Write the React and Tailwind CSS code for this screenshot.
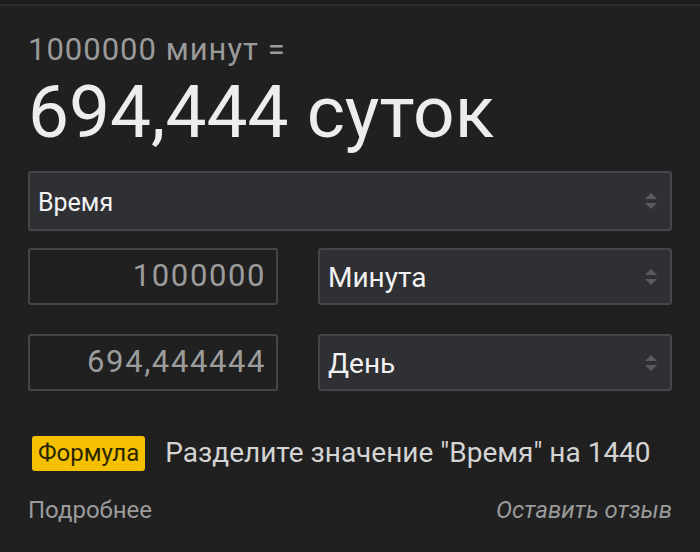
import React from 'react';

function Arrows() {
    return (
        <svg width="14" height="20" viewBox="0 0 14 20" className="shrink-0">
            <path d="M7 2 L13 8 H1 Z" fill="#5a5b5f" />
            <path d="M7 18 L13 12 H1 Z" fill="#5a5b5f" />
        </svg>
    );
}

function Select({ label, className = '' }) {
    return (
        <div className={`flex items-center justify-between bg-[#2f3034] border-2 border-[#45464a] rounded-[3px] pl-[8px] pr-[12px] ${className}`}>
            <span className="text-[#f2f2f2] pt-[3px]">{label}</span>
            <Arrows />
        </div>
    );
}

function Field({ value }) {
    return (
        <div className="w-[250px] h-[57px] flex items-center justify-end border-2 border-[#45464a] rounded-[3px] pr-[10px] bg-[#202020]">
            <span className="text-[31px] tracking-[1.6px] text-[#9c9c9c]">{value}</span>
        </div>
    );
}

export default function App() {
    return (
        <div className="w-[700px] h-[552px] bg-[#202020] font-['Roboto',sans-serif] flex flex-col">
            <div className="h-[6px] bg-[#1c1c1c] border-b-2 border-[#2a2b2c]" />
            <div className="px-[28px] pt-[24px]">
                <p className="text-[31px] leading-[40px] tracking-[1px] text-[#9a9a9a]">1000000 минут =</p>
                <p className="text-[73px] leading-[84px] text-[#ededed]">694,444 суток</p>

                <Select label="Время" className="mt-[17px] h-[60px] text-[25px]" />

                <div className="flex items-center gap-[40px] mt-[17px]">
                    <Field value="1000000" />
                    <Select label="Минута" className="flex-1 h-[57px] text-[28px]" />
                </div>
                <div className="flex items-center gap-[40px] mt-[29px]">
                    <Field value="694,444444" />
                    <Select label="День" className="flex-1 h-[57px] text-[28px]" />
                </div>

                <div className="flex items-center mt-[41px] ml-[4px]">
                    <span className="bg-[#f4c000] text-[#2a2600] text-[24px] leading-[35px] px-[6px] rounded-[3px]">Формула</span>
                    <span className="ml-[20px] text-[28px] text-[#d4d4d4]">Разделите значение "Время" на 1440</span>
                </div>

                <div className="flex items-center justify-between mt-[18px] text-[24px] text-[#9a9a9a]">
                    <span>Подробнее</span>
                    <span className="italic">Оставить отзыв</span>
                </div>
            </div>
        </div>
    );
}
